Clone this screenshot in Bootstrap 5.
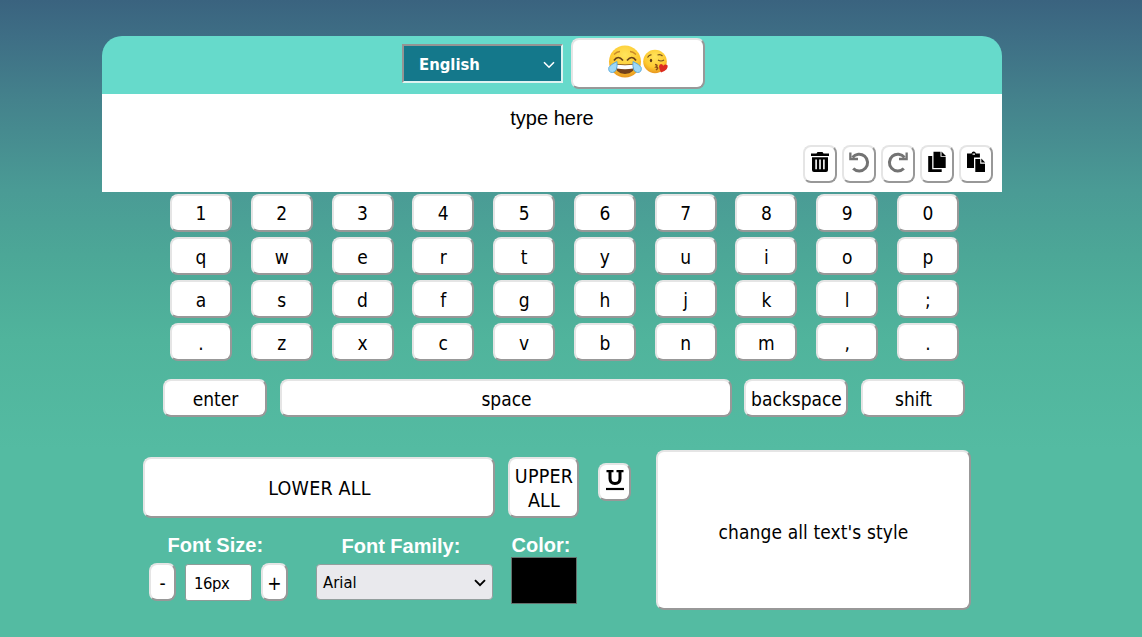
<!DOCTYPE html>
<html lang="en">
<head>
<meta charset="utf-8">
<meta name="viewport" content="width=device-width, initial-scale=1">
<title>Virtual keyboard</title>
<link href="https://cdn.jsdelivr.net/npm/bootstrap@5.3.0/dist/css/bootstrap.min.css" rel="stylesheet">
<style>
  body {
    height: 637px; overflow: hidden; color: #000;
    font-family: "DejaVu Sans Condensed", "DejaVu Sans", sans-serif;
    font-stretch: condensed;
    background: linear-gradient(#3a637f 0, #3e6e85 36px, #44828c 100px, #4a9b95 190px, #4ca797 255px, #50b49c 340px, #54bba2 450px, #54bba2 100%);
  }
  .board { width: 900px; margin-left: 102px; padding-top: 36px; }
  .topbar { height: 58px; background: #66dacb; border-radius: 20px 20px 0 0; padding: 2px 0 0 300px; }
  .lang { width: 161px; height: 39px; margin-top: 6px; background: #14788b; color: #fff; font-size: 16.5px; border: 2px solid; border-color: #949494 #dff3f1 #dff3f1 #949494; padding: 3px 6px 0 15px; }
  .cap {
    background: #fff; border: 2px solid; border-color: #e5e5e5 #989898 #989898 #e5e5e5; border-radius: 8px;
    color: #000; font-size: 19px; line-height: 24px; height: 38px; padding: 0;
    display: flex; align-items: center; justify-content: center;
  }
  .cap span { white-space: nowrap; }
  .emo { width: 134px; height: 51px; margin-left: 8px; gap: 1px; padding-bottom: 4px; }
  .screen { height: 98px; background: #fff; padding: 10px 9px 9px; }
  .typed { font: 20px/28px "Liberation Sans", Arial, sans-serif; }
  .tool { width: 34px; padding-bottom: 4px; }
  .keys { display: grid; grid-template-columns: repeat(10, 62px); column-gap: 18.77px; row-gap: 5px; margin: 2px 0 0 68px; }
  .keys .cap:nth-child(n+11) { padding-top: 1px; }
  .wide { gap: 13px; margin: 18px 0 0 61px; }
  .wide .cap { padding: 1px 0 0 1px; }
  .w104 { width: 104px; }
  .controls { margin: 33px 0 0 41px; }
  .left { width: 513px; padding-top: 7px; }
  .tall { height: 61px; padding: 3px 0 0 1px; font-size: 19.5px; letter-spacing: .2px; }
  .caption { font: bold 20px/24px "Liberation Sans", Arial, sans-serif; color: #fff; white-space: nowrap; padding-left: .5px; }
  .num { width: 67px; height: 37px; background: #fff; border: 1px solid #8e9c98; border-radius: 3px; padding: 2px 0 0 8px; font-size: 16.5px; line-height: 34px; letter-spacing: -.4px; }
  .family { width: 177px; height: 36px; background: #e9e9ed; border: 1px solid #929e9d; border-radius: 4px; padding: 2px 6px 0; font-size: 16.5px; }
  .family svg, .lang svg { margin-top: -1px; }
  .swatch { width: 66px; height: 47px; background: #000; border: 1px solid #64706d; }
  .apply { width: 315px; height: 160px; padding-top: 4px; letter-spacing: .1px; }
</style>
</head>
<body>
<main class="board">
  <header class="topbar d-flex align-items-start">
    <div class="lang d-flex align-items-center justify-content-between fw-bold"><span>English</span>
      <svg width="12" height="8" viewBox="0 0 12 8" fill="none" stroke="#fff" stroke-width="1.6"><path d="m1 1.200 5 5 5-5"/></svg></div>
    <button class="cap emo" aria-label="Emoji">
      <svg width="34" height="34" viewBox="0 0 34 34">
        <defs><radialGradient id="face" cx=".5" cy=".3" r=".7"><stop stop-color="#ffe45c"/><stop offset=".65" stop-color="#fdc930"/><stop offset="1" stop-color="#e8961f"/></radialGradient></defs>
        <circle cx="17" cy="16.500" r="16" fill="url(#face)"/>
        <path d="M6 9.500q3-3 6-3M22 6.500q3 0 6 3" fill="none" stroke="#c98a28" stroke-width="1.300"/>
        <path d="M6 15.500q4-6 9 0M19 15.500q5-6 9 0" fill="none" stroke="#6b4117" stroke-width="1.700"/>
        <path d="M6.500 18.500q10.500 2 21 0Q27 29 17 29T6.500 18.500z" fill="#73401a"/>
        <path d="M8 19.400q9 1.600 18 0l-1 4q-8 1.500-16 0z" fill="#fff"/>
        <path d="M9 16.500Q10 27 4.500 27.500 0 27.500.8 22.500 3 19 9 16.500zM25 16.500Q24 27 29.500 27.500q4.500 0 3.700-5Q31 19 25 16.500z" fill="#9ed8f6" stroke="#4aa0d5" stroke-width=".8"/>
      </svg>
      <svg width="26" height="26" viewBox="0 0 26 26">
        <circle cx="12" cy="12.500" r="11.800" fill="url(#face)"/>
        <path d="M4.500 8.500q2-3 4-2.500M14.500 6q3-1 5 1M15 11q3 2 6 0" fill="none" stroke="#76501d" stroke-width="1.200"/>
        <ellipse cx="8" cy="11.500" rx="1.200" ry="1.800" fill="#5f3a16"/>
        <path d="M12 15.500q3.500.5 1 2.500 3.500.5 0 3" fill="none" stroke="#8a5018" stroke-width="1.500"/>
        <path d="M18 23.500q-4-8 0-8.500 1.600 0 2.300 1.700 2-2.200 4.200-.5Q26 20.500 18 23.500z" fill="#dc2c20"/>
      </svg>
    </button>
  </header>

  <section class="screen d-flex flex-column justify-content-between">
    <div class="typed text-center">type here</div>
    <div class="d-flex justify-content-end" style="gap:5px">
      <button class="cap tool" aria-label="Clear"><svg width="20" height="22" viewBox="0 0 20 22"><path d="M1 2.500h5.500L7.500 1h5l1 1.500H19V5H1z"/><path fill-rule="evenodd" d="M2 6.200h16V19q0 2-2 2H4q-2 0-2-2zM5.300 8.500v9.800h1.600V8.500zm3.900 0v9.800h1.600V8.500zm3.900 0v9.800h1.600V8.500z"/></svg></button>
      <button class="cap tool" aria-label="Undo"><svg width="22" height="22" viewBox="0 0 22 22" fill="none" stroke="#737373" stroke-width="3"><path d="M4.500 6.500A8.400 8.400 0 1 1 5.200 17.500"/><path d="M1.200 1.500h2.300v5.200H10v2.600H1.200z" fill="#737373" stroke="none"/></svg></button>
      <button class="cap tool" aria-label="Redo"><svg width="22" height="22" viewBox="0 0 22 22" fill="none" stroke="#737373" stroke-width="3"><path d="M17.500 6.500A8.400 8.400 0 1 0 16.800 17.500"/><path d="M20.800 1.500h-2.300v5.200H12v2.600h8.800z" fill="#737373" stroke="none"/></svg></button>
      <button class="cap tool" aria-label="Copy"><svg width="20" height="22" viewBox="0 0 20 22"><path d="M6.500.8h7v5h5.200V17H6.500z"/><path d="M14.500.5 19 5h-4.500zM1.200 5h4v13.200h9.500V21H1.200z"/></svg></button>
      <button class="cap tool" aria-label="Paste"><svg width="20" height="22" viewBox="0 0 20 22"><path fill-rule="evenodd" d="M1 2.500h4.500q.4-2 2.200-2t2.200 2h4v4H8V17H1zM6.500 2.500v1.300H9V2.500z"/><path d="M9.300 8h4.900v4.800H19V21H9.300zM15.300 7.500 19.200 11.500h-3.900z"/></svg></button>
    </div>
  </section>

  <section class="keys">
    <button class="cap">1</button><button class="cap">2</button><button class="cap">3</button><button class="cap">4</button><button class="cap">5</button><button class="cap">6</button><button class="cap">7</button><button class="cap">8</button><button class="cap">9</button><button class="cap">0</button>
    <button class="cap">q</button><button class="cap">w</button><button class="cap">e</button><button class="cap">r</button><button class="cap">t</button><button class="cap">y</button><button class="cap">u</button><button class="cap">i</button><button class="cap">o</button><button class="cap">p</button>
    <button class="cap">a</button><button class="cap">s</button><button class="cap">d</button><button class="cap">f</button><button class="cap">g</button><button class="cap">h</button><button class="cap">j</button><button class="cap">k</button><button class="cap">l</button><button class="cap">;</button>
    <button class="cap">.</button><button class="cap">z</button><button class="cap">x</button><button class="cap">c</button><button class="cap">v</button><button class="cap">b</button><button class="cap">n</button><button class="cap">m</button><button class="cap">,</button><button class="cap">.</button>
  </section>

  <section class="wide d-flex">
    <button class="cap w104"><span>enter</span></button>
    <button class="cap" style="width:452px"><span>space</span></button>
    <button class="cap w104" style="margin-left:-1px"><span>backspace</span></button>
    <button class="cap w104"><span>shift</span></button>
  </section>

  <section class="controls d-flex align-items-start">
    <div class="left">
      <div class="d-flex align-items-start">
        <button class="cap tall" style="width:352px"><span>LOWER ALL</span></button>
        <button class="cap tall" style="width:71px;margin-left:13px"><span>UPPER<br>ALL</span></button>
        <button class="cap" style="width:33px;margin:6px 0 0 19px;padding-bottom:5px" aria-label="Underline"><svg width="20" height="22" viewBox="0 0 20 22" fill="none" stroke="#000"><path d="M1.500 2.200h7M11.500 2.200h7" stroke-width="2.200"/><path d="M5 2v7.500q0 5 5 5t5-5V2" stroke-width="3"/><path d="M1 20h18" stroke-width="2.200"/></svg></button>
      </div>
      <div class="d-flex align-items-start" style="padding:15px 0 0 6px">
        <div style="width:167px">
          <div class="caption" style="padding-left:18.5px">Font Size:</div>
          <div class="d-flex" style="padding-top:6px;gap:9px">
            <button class="cap" style="width:27px;padding-top:1px">-</button>
            <div class="num" style="margin-top:1px">16px</div>
            <button class="cap" style="width:27px;padding-top:1px">+</button>
          </div>
        </div>
        <div style="width:195px">
          <div class="caption" style="padding:1px 0 0 25.500px">Font Family:</div>
          <div class="family d-flex align-items-center justify-content-between" style="margin-top:6px"><span>Arial</span>
            <svg width="12" height="8" viewBox="0 0 12 8" fill="none" stroke="#000" stroke-width="1.900"><path d="m1 1.200 5 5 5-5"/></svg></div>
        </div>
        <div>
          <div class="caption">Color:</div>
          <div class="swatch"></div>
        </div>
      </div>
    </div>
    <button class="cap apply"><span>change all text's style</span></button>
  </section>
</main>
<script src="https://cdn.jsdelivr.net/npm/bootstrap@5.3.0/dist/js/bootstrap.bundle.min.js"></script>
</body>
</html>
